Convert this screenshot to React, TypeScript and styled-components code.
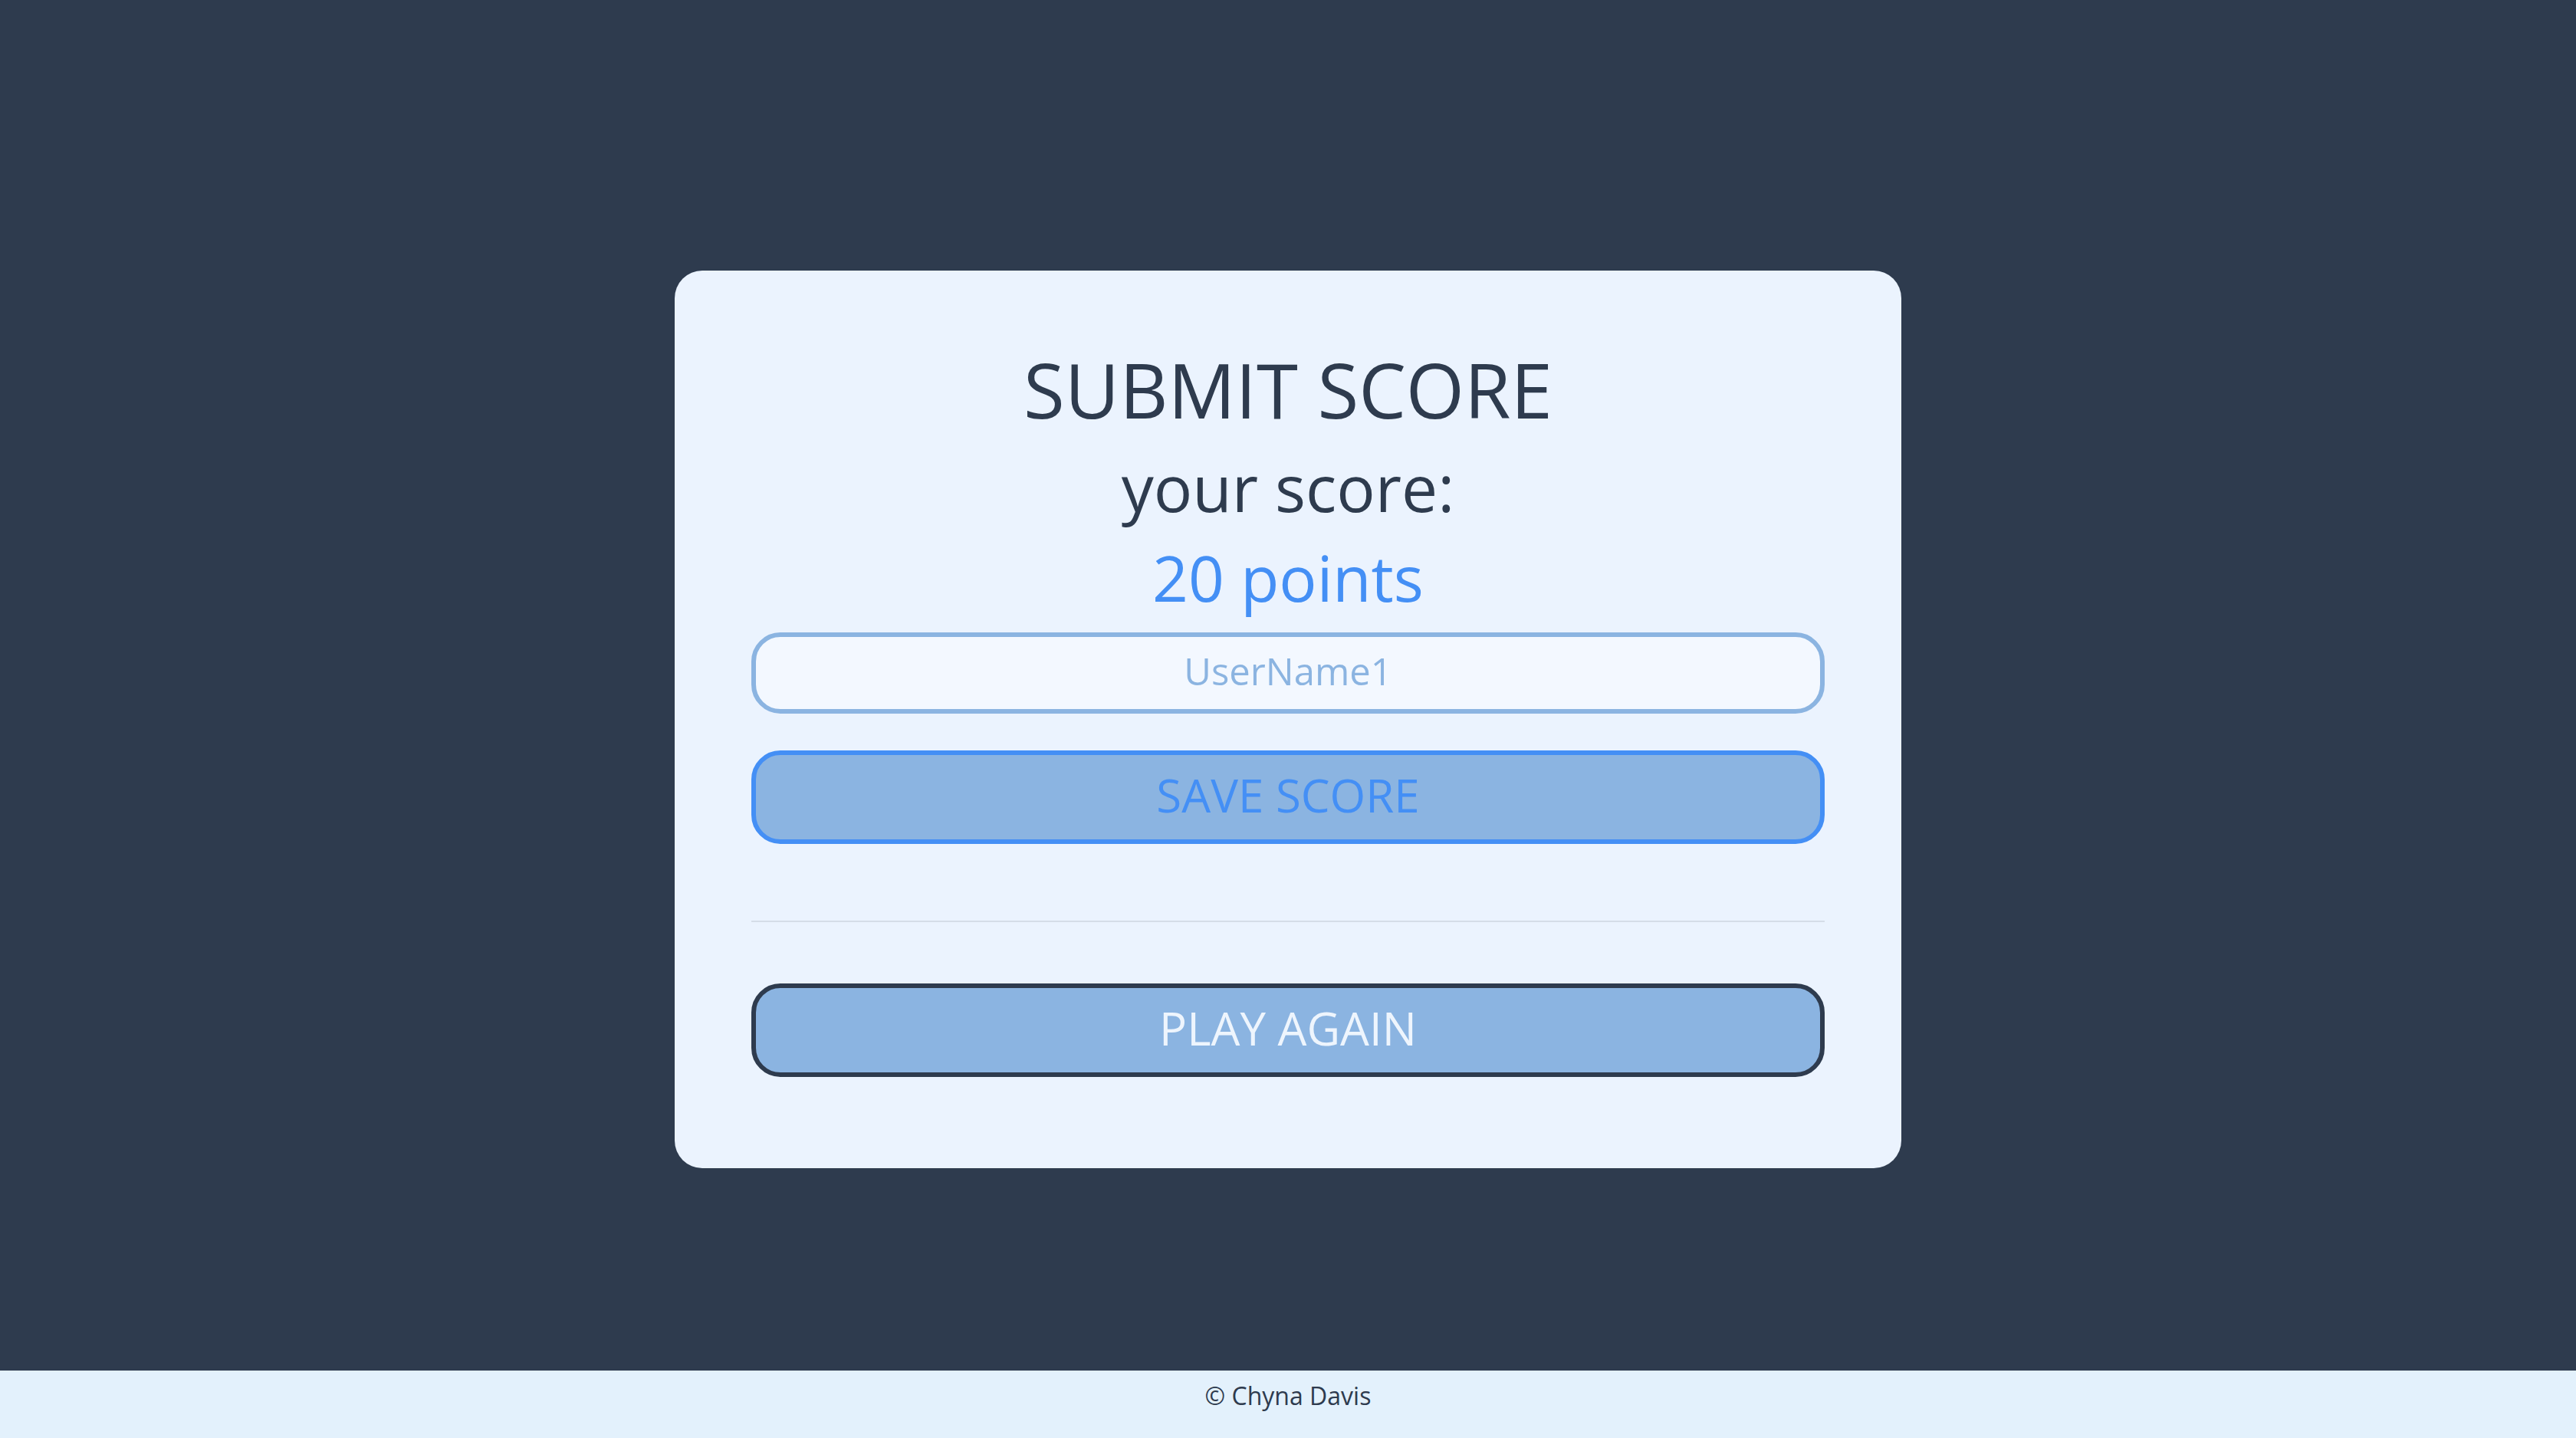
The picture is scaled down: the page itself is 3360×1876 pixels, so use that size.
import React, { useState } from "react";
import styled, { createGlobalStyle } from "styled-components";

const GlobalStyle = createGlobalStyle`
  html, body {
    margin: 0;
    padding: 0;
    background: #2e3b4e;
  }
  * { box-sizing: border-box; }
  body {
    font-family: "Open Sans", "Liberation Sans", sans-serif;
  }
`;

const Page = styled.div`
  min-height: 100vh;
  display: flex;
  flex-direction: column;
  background: #2e3b4e;
`;

const Header = styled.header`
  height: 88px;
  flex: none;
`;

const Main = styled.main`
  flex: 1;
  display: flex;
  align-items: center;
  justify-content: center;
`;

const Card = styled.section`
  width: 1600px;
  background: #ebf3fe;
  border-radius: 36px;
  padding: 105px 100px 119px;
  display: flex;
  flex-direction: column;
  align-items: stretch;
  text-align: center;
  color: #2e3b4e;
`;

const Title = styled.h1`
  margin: 0;
  font-size: 98px;
  line-height: 100px;
  height: 100px;
  font-weight: 400;
  color: #2e3b4e;
`;

const Subtitle = styled.h2`
  margin: 36px 0 0;
  font-size: 84px;
  line-height: 84px;
  height: 84px;
  font-weight: 400;
  color: #2e3b4e;
`;

const Points = styled.p`
  margin: 34px 0 0;
  font-size: 82px;
  line-height: 82px;
  height: 82px;
  font-weight: 400;
  color: #448ff5;
`;

const NameInput = styled.input`
  margin-top: 31px;
  height: 106px;
  width: 100%;
  border: 6px solid #8bb4e1;
  border-radius: 38px;
  background: #f3f8ff;
  color: #8bb4e1;
  caret-color: #8bb4e1;
  font-family: "Open Sans", "Liberation Sans", sans-serif;
  font-size: 49px;
  text-align: center;
  outline: none;
  padding: 0 40px 6px;
`;

const Button = styled.button<{ $variant: "save" | "play" }>`
  height: 122px;
  width: 100%;
  border-radius: 38px;
  background: #8bb4e1;
  border: 6px solid ${(p) => (p.$variant === "save" ? "#448ff5" : "#2e3b4e")};
  color: ${(p) => (p.$variant === "save" ? "#448ff5" : "#eef5fd")};
  font-family: "Open Sans", "Liberation Sans", sans-serif;
  font-size: 60px;
  font-weight: 400;
  line-height: 1;
  padding: 0 0 6px;
  cursor: pointer;
  margin-top: ${(p) => (p.$variant === "save" ? "48px" : "80px")};
`;

const Divider = styled.hr`
  margin: 100px 0 0;
  border: none;
  height: 2px;
  background: #d5dde8;
`;

const Footer = styled.footer`
  height: 88px;
  flex: none;
  background: #e3f1fc;
  color: #2e3b4e;
  font-size: 32px;
  line-height: 32px;
  padding-top: 17px;
  text-align: center;
`;

export default function App() {
  const [name, setName] = useState("UserName1");
  return (
    <Page>
      <GlobalStyle />
      <Header />
      <Main>
        <Card>
          <Title>SUBMIT SCORE</Title>
          <Subtitle>your score:</Subtitle>
          <Points>20 points</Points>
          <NameInput
            autoFocus
            value={name}
            onChange={(e) => setName(e.target.value)}
            placeholder="Enter your name"
          />
          <Button $variant="save">SAVE SCORE</Button>
          <Divider />
          <Button $variant="play">PLAY AGAIN</Button>
        </Card>
      </Main>
      <Footer>© Chyna Davis</Footer>
    </Page>
  );
}
